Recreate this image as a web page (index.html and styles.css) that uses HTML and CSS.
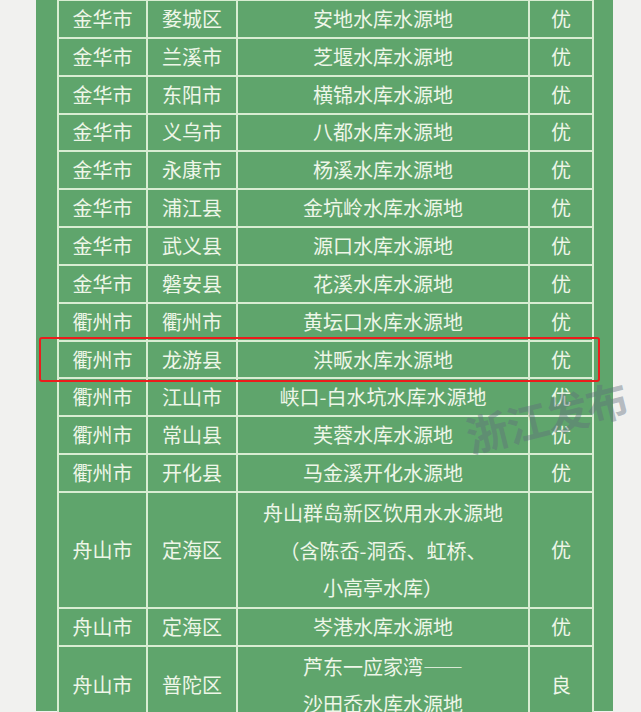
FILE: index.html
```html
<!DOCTYPE html>
<html lang="zh">
<head>
<meta charset="utf-8">
<title>水源地水质</title>
<link rel="stylesheet" href="styles.css">
</head>
<body>
<div class="page">
  <div class="panel">
    <div class="grid">
      <div class="c">金华市</div><div class="c">婺城区</div><div class="c">安地水库水源地</div><div class="c">优</div>
      <div class="c">金华市</div><div class="c">兰溪市</div><div class="c">芝堰水库水源地</div><div class="c">优</div>
      <div class="c">金华市</div><div class="c">东阳市</div><div class="c">横锦水库水源地</div><div class="c">优</div>
      <div class="c">金华市</div><div class="c">义乌市</div><div class="c">八都水库水源地</div><div class="c">优</div>
      <div class="c">金华市</div><div class="c">永康市</div><div class="c">杨溪水库水源地</div><div class="c">优</div>
      <div class="c">金华市</div><div class="c">浦江县</div><div class="c">金坑岭水库水源地</div><div class="c">优</div>
      <div class="c">金华市</div><div class="c">武义县</div><div class="c">源口水库水源地</div><div class="c">优</div>
      <div class="c">金华市</div><div class="c">磐安县</div><div class="c">花溪水库水源地</div><div class="c">优</div>
      <div class="c">衢州市</div><div class="c">衢州市</div><div class="c">黄坛口水库水源地</div><div class="c">优</div>
      <div class="c">衢州市</div><div class="c">龙游县</div><div class="c">洪畈水库水源地</div><div class="c">优</div>
      <div class="c">衢州市</div><div class="c">江山市</div><div class="c">峡口-白水坑水库水源地</div><div class="c">优</div>
      <div class="c">衢州市</div><div class="c">常山县</div><div class="c">芙蓉水库水源地</div><div class="c">优</div>
      <div class="c">衢州市</div><div class="c">开化县</div><div class="c">马金溪开化水源地</div><div class="c">优</div>
      <div class="c">舟山市</div><div class="c">定海区</div><div class="c multi">舟山群岛新区饮用水水源地<br>（含陈岙-洞岙、虹桥、<br>小高亭水库）</div><div class="c">优</div>
      <div class="c">舟山市</div><div class="c">定海区</div><div class="c">岑港水库水源地</div><div class="c">优</div>
      <div class="c">舟山市</div><div class="c">普陀区</div><div class="c multi">芦东一应家湾——<br>沙田岙水库水源地</div><div class="c">良</div>
    </div>
  </div>
  <div class="highlight"></div>
  <div class="watermark">浙江发布</div>
</div>
</body>
</html>
```
FILE: styles.css
```css
html, body {
  margin: 0;
  padding: 0;
}
body {
  background: #f1f1ef;
  font-family: "Noto Sans CJK SC", "Noto Sans", sans-serif;
  overflow: hidden;
}
.page {
  position: relative;
  width: 641px;
  height: 712px;
  overflow: hidden;
  background: #f1f1ef;
}
.panel {
  margin-left: 36px;
  width: 577px;
  height: 712px;
  background: #5fa56c;
  padding-left: 21px;
  box-sizing: border-box;
}
.grid {
  display: grid;
  grid-template-columns: 87px 88px 290px 62px;
  gap: 2px;
  padding: 2px;
  width: 537px;
  box-sizing: border-box;
  background: #d8edd2;
  margin-top: -1px;
}
.c {
  background: #5fa56c;
  color: #eef6e8;
  font-size: 20px;
  min-height: 35.85px;
  display: flex;
  align-items: center;
  justify-content: center;
  text-align: center;
  line-height: 24px;
  white-space: nowrap;
}
.c.multi {
  line-height: 37.6px;
  padding-top: 1px;
}
.highlight {
  position: absolute;
  left: 39px;
  top: 337px;
  width: 561px;
  height: 45px;
  box-sizing: border-box;
  border: 2.5px solid #ec1c1c;
  border-radius: 3px;
}
.watermark {
  position: absolute;
  left: 474px;
  top: 404px;
  font-size: 42px;
  font-weight: 700;
  color: rgba(95, 110, 125, 0.42);
  transform: rotate(-14deg);
  transform-origin: left bottom;
  letter-spacing: -1px;
  white-space: nowrap;
}
```
